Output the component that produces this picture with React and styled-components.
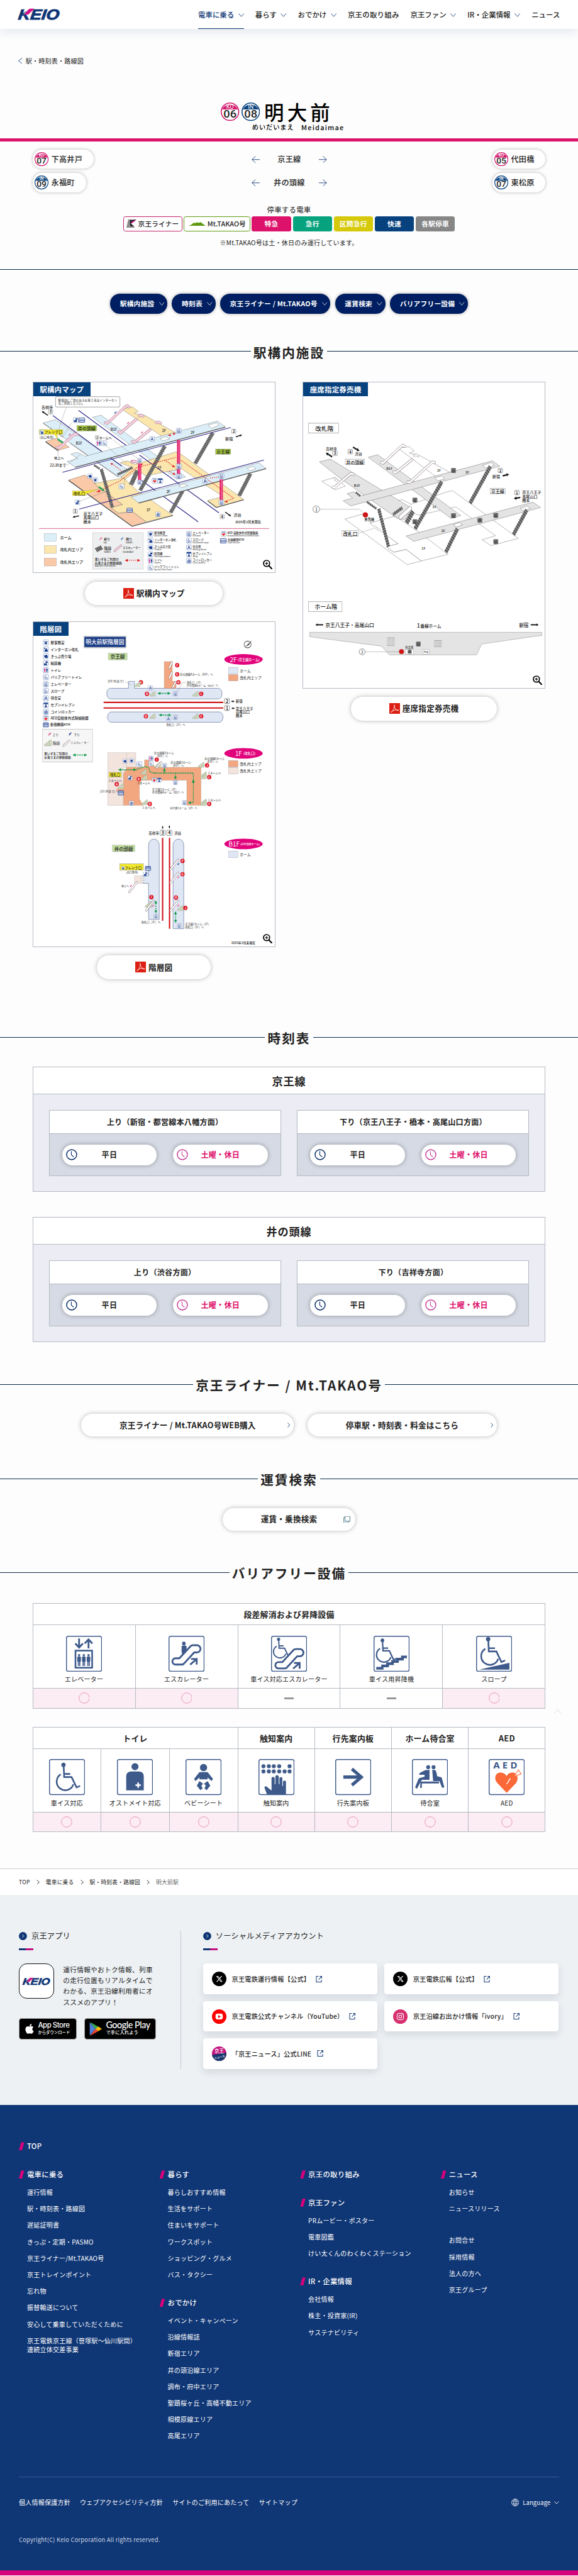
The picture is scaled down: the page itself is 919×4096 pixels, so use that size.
import React, { createContext, useContext } from "react";
import styled, { createGlobalStyle, css } from "styled-components";
import { FaApple, FaXTwitter, FaInstagram } from "react-icons/fa6";

const NAVY = "#0f3675";
const PINK = "#dd126b";
const LINE = "#b4bac2";

const GlobalStyle = createGlobalStyle`
  * { box-sizing: border-box; }
  body {
    margin: 0;
    background: #fdfdfd;
    overflow: hidden;
  }
`;

const Page = styled.div`
  width: 1284px;
  zoom: 0.71573;
  position: relative;
  color: #222;
  font-family: "Noto Sans CJK JP", "Noto Sans", sans-serif;
  font-size: 16px;
  letter-spacing: 0.02em;
  line-height: 1.5;
  white-space: nowrap;
`;

/* ---------- header ---------- */

const Header = styled.header`
  height: 64px;
  padding: 0 40px;
  display: flex;
  align-items: center;
  justify-content: space-between;
  background: #fff;
  box-shadow: 0 8px 20px rgba(15, 54, 117, 0.1);
`;

const LogoArt = styled.svg`
  display: block;
  overflow: visible;
`;

const Nav = styled.nav`
  display: flex;
  align-self: stretch;
  gap: 25px;
`;

const NavItem = styled.a`
  display: flex;
  align-items: center;
  gap: 9px;
  padding-top: 4px;
  font-size: 16px;
  font-weight: 500;
  letter-spacing: ${(p) => (p.$wide ? "0.02em" : "0")};
  color: ${(p) => (p.$active ? NAVY : "#222")};
  border-bottom: 2px solid ${(p) => (p.$active ? NAVY : "transparent")};
`;

const BackLink = styled.a`
  display: flex;
  align-items: center;
  gap: 8px;
  height: 22px;
  margin: 60px 0 0 40px;
  font-size: 14px;
`;

/* ---------- station sign ---------- */

const StationHead = styled.div`
  width: 302px;
  margin: 82px auto 14px;
`;

const NameRow = styled.div`
  display: flex;
  align-items: center;
  gap: 4px;
  height: 41px;
`;

const StationName = styled.h1`
  margin: 0 0 0 6px;
  font-size: 44px;
  font-weight: 500;
  letter-spacing: 0.16em;
  line-height: 41px;
  color: #000;
`;

const Ruby = styled.div`
  display: flex;
  gap: 16px;
  height: 20px;
  margin-top: 4px;
  padding-left: 69px;
  font-size: 14.3px;
  font-weight: 500;
  line-height: 20px;
  letter-spacing: 0.09em;
  color: #000;
  span + span {
    font-size: 15.3px;
    letter-spacing: 0.11em;
  }
`;

const PinkBar = styled.div`
  height: 7px;
  background: ${PINK};
`;

const Neighbours = styled.div`
  display: flex;
  flex-direction: column;
  gap: 10px;
  padding: 19px 72px 0 73px;
`;

const NeighbourRow = styled.div`
  display: grid;
  grid-template-columns: 1fr auto 1fr;
  align-items: center;
  height: 42px;
  > :last-child { justify-self: end; }
  > :first-child { justify-self: start; }
`;

const StationPill = styled.a`
  display: flex;
  align-items: center;
  gap: 6px;
  height: 42px;
  padding: 0 25px 0 4px;
  border-radius: 21px;
  background: #fff;
  font-size: 17px;
  font-weight: 500;
  box-shadow: 0 0 8px rgba(0, 0, 0, 0.3);
`;

const LineName = styled.div`
  display: flex;
  align-items: center;
  justify-content: space-between;
  width: 168px;
  font-size: 17px;
  font-weight: 500;
`;

const StopTitle = styled.div`
  margin-top: 28px;
  text-align: center;
  font-size: 16px;
  line-height: 20px;
`;

const Tags = styled.div`
  display: flex;
  justify-content: center;
  gap: 4px;
  margin-top: 6px;
`;

const Tag = styled.span`
  display: flex;
  align-items: center;
  justify-content: center;
  gap: 3px;
  width: ${(p) => p.$w || 87}px;
  height: 33px;
  border-radius: 5px;
  font-size: 15px;
  font-weight: 700;
  color: #fff;
  background: ${(p) => p.$bg};
  ${(p) => p.$border && css`
    background: #fff;
    color: #222;
    font-weight: 500;
    letter-spacing: 0.01em;
    border: 2px solid ${p.$border};
  `}
`;

const Note = styled.p`
  margin: 15px 0 49px;
  text-align: center;
  font-size: 14px;
  line-height: 20px;
`;

const Rule = styled.div`
  height: 1px;
  background: #0b2c49;
`;

const Anchors = styled.div`
  display: flex;
  justify-content: center;
  gap: 10px;
  margin: 54px 0 62px;
`;

const Anchor = styled.a`
  display: flex;
  align-items: center;
  gap: 10px;
  height: 44px;
  padding: 0 7px 0 22px;
  border-radius: 22px;
  background: #001f62;
  color: #fff;
  font-size: 15px;
  font-weight: 700;
  box-shadow: 0 0 8px rgba(0, 0, 0, 0.35);
`;

const HeadingRow = styled.h2`
  display: flex;
  align-items: center;
  gap: 6px;
  height: 44px;
  margin: ${(p) => p.$top || 0}px 0 0;
  font-size: 28.8px;
  font-weight: 700;
  letter-spacing: 0.1em;
  line-height: 44px;
  &::before, &::after {
    content: "";
    flex: 1;
    height: 1px;
    background: #0b2c49;
  }
  span { padding-top: 4px; }
`;

/* ---------- map cards ---------- */

const MapGrid = styled.div`
  display: grid;
  grid-template-columns: 540px 540px;
  column-gap: 60px;
  align-items: start;
  margin: 45px 72px 0;
`;

const MapColumn = styled.div`
  display: flex;
  flex-direction: column;
  align-items: center;
`;

const MapCard = styled.div`
  position: relative;
  display: flex;
  flex-direction: column;
  width: 540px;
  height: ${(p) => p.$h}px;
  margin-top: ${(p) => p.$mt || 0}px;
  border: 1px solid ${LINE};
  background: #fff;
`;

const MapLabel = styled.div`
  align-self: flex-start;
  height: 31px;
  padding: 0 15px;
  background: #07427f;
  color: #fff;
  font-size: 16px;
  font-weight: 700;
  line-height: 31px;
`;

const Diagram = styled.svg`
  display: block;
  width: 538px;
  height: ${(p) => p.$h}px;
`;

const Magnifier = styled.svg`
  position: absolute;
  right: 5px;
  bottom: 6px;
  width: 22px;
  height: 22px;
`;

const PillButton = styled.a`
  position: relative;
  display: inline-flex;
  align-items: center;
  gap: 5px;
  height: ${(p) => p.$h || 50}px;
  margin-top: ${(p) => p.$mt || 0}px;
  padding: 0 85px;
  border-radius: 27px;
  background: #fff;
  font-size: 17.6px;
  font-weight: 700;
  box-shadow: 0 0 11px rgba(0, 0, 0, 0.28);
`;

const EndIcon = styled.span`
  position: absolute;
  right: ${(p) => p.$right}px;
  top: 50%;
  display: flex;
  transform: translateY(-50%);
`;

const ButtonRow = styled.div`
  display: flex;
  justify-content: center;
  gap: 30px;
  margin-top: 43px;
`;

/* ---------- timetable ---------- */

const TimeBox = styled.section`
  height: 278px;
  margin: ${(p) => p.$mt}px 72px 0;
  border: 1px solid ${LINE};
  background: #ebecf4;
`;

const TimeTitle = styled.h3`
  margin: 0;
  height: 60px;
  border-bottom: 1px solid ${LINE};
  background: #fff;
  text-align: center;
  font-size: 24px;
  font-weight: 700;
  letter-spacing: 0.05em;
  line-height: 62px;
`;

const Directions = styled.div`
  display: grid;
  grid-template-columns: 1fr 1fr;
  gap: 36px;
  padding: 35px;
`;

const Direction = styled.div`
  height: 146px;
  border: 1px solid ${LINE};
  background: #d5dae4;
`;

const DirectionTitle = styled.h4`
  margin: 0;
  height: 51px;
  border-bottom: 1px solid ${LINE};
  background: #fff;
  text-align: center;
  font-size: 16.9px;
  font-weight: 700;
  line-height: 51px;
`;

const Days = styled.div`
  display: grid;
  grid-template-columns: 1fr 1fr;
  gap: 36px;
  padding: 23.5px 28px;
`;

const DayButton = styled.a`
  position: relative;
  display: flex;
  align-items: center;
  justify-content: center;
  height: 46px;
  border-radius: 23px;
  background: #fff;
  color: ${(p) => (p.$holiday ? PINK : "#222")};
  font-size: 16.9px;
  font-weight: 700;
  box-shadow: 0 0 11px rgba(0, 0, 0, 0.32);
  svg {
    position: absolute;
    left: 9px;
    top: 10px;
  }
`;

/* ---------- barrier-free tables ---------- */

const FacilityTable = styled.div`
  display: grid;
  grid-template-columns: ${(p) => p.$cols};
  grid-template-rows: 47.5px 141px 1fr;
  height: 234px;
  margin: ${(p) => p.$mt}px 72px 0;
  border-top: 1px solid ${LINE};
  border-left: 1px solid ${LINE};
`;

const Cell = styled.div`
  display: flex;
  flex-direction: column;
  align-items: center;
  justify-content: center;
  border-right: 1px solid ${LINE};
  border-bottom: 1px solid ${LINE};
  background: ${(p) => (p.$yes ? "#fcecf4" : "#fff")};
`;

const HeadCell = styled(Cell)`
  grid-column: span ${(p) => p.$span || 1};
  font-size: 18px;
  font-weight: 700;
`;

const FacilityCell = styled(Cell)`
  justify-content: flex-start;
  gap: 6px;
  padding-top: 23px;
  font-size: 14px;
`;

const Dash = styled.span`
  width: 22px;
  height: 4px;
  background: #979797;
`;

const PageTop = styled.div`
  position: absolute;
  left: 1231px;
  top: 3797px;
  display: flex;
`;

/* ---------- lower page ---------- */

const Breadcrumb = styled.div`
  display: flex;
  align-items: center;
  gap: 14px;
  height: 57.5px;
  margin-top: 81px;
  padding: 0 42px;
  border-top: 1px solid #cfcfcf;
  background: #fff;
  font-size: 12.2px;
  span:last-child { color: #666; }
`;

const Promo = styled.section`
  display: flex;
  height: 468px;
  padding: 80px 42px;
  background: #edf1f4;
`;

const AppColumn = styled.div`
  width: 361px;
  height: 308px;
  border-right: 1px solid #c3c9d0;
`;

const SocialColumn = styled.div`
  flex: 1;
  padding-left: 48px;
`;

const PromoTitle = styled.h3`
  display: flex;
  align-items: center;
  gap: 10px;
  height: 24px;
  margin: 0;
  font-size: 17px;
  font-weight: 400;
`;

const TwoTone = styled.div`
  width: 32px;
  height: 4px;
  margin: 15.5px 0 30px;
  background: linear-gradient(90deg, ${NAVY} 50%, #c20f80 50%);
`;

const AppInfo = styled.div`
  display: flex;
  gap: 20px;
  p {
    width: 206px;
    margin: 1px 0 0;
    font-size: 15px;
    line-height: 24px;
    letter-spacing: 0.025em;
    white-space: normal;
  }
`;

const AppIcon = styled.div`
  display: flex;
  align-items: center;
  justify-content: center;
  width: 78px;
  height: 78px;
  border: 1px solid #111;
  border-radius: 18px;
  background: #fff;
`;

const Stores = styled.div`
  display: flex;
  gap: 17px;
  margin-top: 24px;
`;

const StoreBadge = styled.a`
  display: flex;
  align-items: center;
  gap: ${(p) => p.$gap}px;
  width: ${(p) => p.$w}px;
  height: 47px;
  padding-left: 10px;
  border: 1px solid #a6a6a6;
  border-radius: 6px;
  background: #000;
  color: #fff;
`;

const StoreText = styled.span`
  display: flex;
  flex-direction: column;
  font-family: ${(p) => (p.$play ? '"Lato"' : '"Inter"')}, "Noto Sans CJK JP", sans-serif;
  font-size: ${(p) => (p.$play ? 20 : 16)}px;
  font-weight: 500;
  line-height: 18px;
  letter-spacing: ${(p) => (p.$play ? "-0.03em" : "-0.04em")};
  small {
    font-size: ${(p) => (p.$play ? 10.3 : 8.9)}px;
    line-height: 14px;
    letter-spacing: 0;
  }
`;

const Cards = styled.div`
  display: grid;
  grid-template-columns: 387.5px 387.5px;
  grid-auto-rows: 68px;
  gap: 15px;
`;

const SocialCard = styled.a`
  display: flex;
  align-items: center;
  gap: 12px;
  padding-left: 20px;
  border-radius: 6px;
  background: #fff;
  font-size: 14.2px;
  font-weight: 500;
  box-shadow: 0 6px 16px rgba(40, 50, 70, 0.13);
`;

const Round = styled.span`
  display: flex;
  align-items: center;
  justify-content: center;
  width: 32px;
  height: 32px;
  border-radius: 50%;
  overflow: hidden;
  background: ${(p) => p.$bg};
  color: #fff;
`;

/* ---------- footer ---------- */

const Footer = styled.footer`
  height: 1045px;
  padding: 79.5px 42px 0;
  border-bottom: 12px solid #d6017c;
  background: ${NAVY};
  color: #fff;
`;

const Sitemap = styled.div`
  display: grid;
  grid-template-columns: repeat(4, 312.4px);
  height: 683.4px;
  margin-top: 38.5px;
`;

const FooterTitle = styled.div`
  display: flex;
  align-items: center;
  gap: 6px;
  height: 24px;
  margin-top: ${(p) => p.$mt || 0}px;
  font-size: 16px;
  font-weight: 500;
`;

const Slash = styled.i`
  width: 12px;
  height: 18px;
  background: #d6017c;
  clip-path: polygon(42% 0, 100% 0, 58% 100%, 0 100%);
`;

const FooterList = styled.ul`
  display: flex;
  flex-direction: column;
  gap: 16.6px;
  margin: ${(p) => p.$mt}px 0 0;
  padding: 0 0 0 18px;
  list-style: none;
  font-size: 14px;
  line-height: 20px;
`;

const FooterBar = styled.div`
  display: flex;
  justify-content: space-between;
  align-items: center;
  height: 112px;
  border-top: 1px solid rgba(255, 255, 255, 0.18);
  font-size: 14px;
`;

const Links = styled.div`
  display: flex;
  gap: 21px;
`;

const Language = styled.div`
  display: flex;
  align-items: center;
  gap: 8px;
  padding-top: 2px;
  font-size: 13px;
`;

const Copyright = styled.div`
  margin-top: 17px;
  font-size: 13px;
  line-height: 20px;
  color: #cfd8e6;
`;

/* ---------- small icons ---------- */

const Chevron = ({ dir = "down", w = 12, h = 7, color = NAVY, sw = 1.2 }) => {
  const paths = {
    down: `M.6 .6 L${w / 2} ${h - 0.6} L${w - 0.6} .6`,
    up: `M.6 ${h - 0.6} L${w / 2} .6 L${w - 0.6} ${h - 0.6}`,
    left: `M${w - 0.6} .6 L.8 ${h / 2} L${w - 0.6} ${h - 0.6}`,
    right: `M.6 .6 L${w - 0.8} ${h / 2} L.6 ${h - 0.6}`,
  };
  return (
    <svg width={w} height={h} fill="none" stroke={color} strokeWidth={sw}>
      <path d={paths[dir]} />
    </svg>
  );
};

const LongArrow = ({ flip }) => (
  <svg width="18" height="16" fill="none" stroke={NAVY} strokeWidth="1.2">
    <path d={flip ? "M0 8 H17 M9 .5 L17 8 L9 15.5" : "M18 8 H1 M9 .5 L1 8 L9 15.5"} />
  </svg>
);

const Logo = ({ w = 93 }) => (
  <LogoArt width={w} height={(w * 24) / 93} viewBox="0 0 93 24">
    <text transform="translate(-1 23.2) skewX(-7)" fontFamily='"Liberation Sans", Arial, sans-serif' fontWeight="700" fontStyle="italic"
      fontSize="32" letterSpacing="0" textLength="91" lengthAdjust="spacingAndGlyphs" fill={NAVY} stroke={NAVY} strokeWidth="1.3">KEIO</text>
    <polygon points="12.5,13 25,-.5 36,-.5 22,13" fill="#d6128a" />
    <path d="M12 12.5 L24 -.5" stroke="#fff" strokeWidth="1.2" />
  </LogoArt>
);

const LINE_COLORS = { KO: "#d3186c", IN: "#0b4580" };

const StationNumber = ({ code, num, size = 41 }) => (
  <svg width={size} height={size} viewBox="0 0 41 41">
    <circle cx="20.5" cy="20.5" r="19.4" fill="#fff" stroke={LINE_COLORS[code]} strokeWidth="2.2" />
    <path d="M3 15.5 A19.4 19.4 0 0 1 38 15.5 Z" fill={LINE_COLORS[code]} />
    <text x="20.5" y="13.8" textAnchor="middle" fontFamily="Roboto, sans-serif" fontSize="12.5" letterSpacing="0" fill="#fff">{code}</text>
    <text x="20.5" y="33" textAnchor="middle" fontFamily="Roboto, sans-serif" fontWeight="500" fontSize="22"
      textLength="29" lengthAdjust="spacingAndGlyphs" letterSpacing="0" fill="#222">{num}</text>
  </svg>
);

const PdfIcon = () => (
  <svg width="24" height="24" viewBox="0 0 24 24">
    <rect width="24" height="24" fill="#dc1f12" />
    <path d="M3.5 20.5 C7 18.5 12 12 11.5 4.5 C11 3 10.3 4.5 11 7 C12 12 16 16.5 20.8 16.8 C22 16.5 20 14.8 16 15 C11 15.2 5 17.5 3.5 20.5 Z"
      fill="none" stroke="#fff" strokeWidth="1.1" />
  </svg>
);

const Clock = ({ color }) => (
  <svg width="25" height="25" fill="none" stroke={color} strokeWidth="2">
    <circle cx="12.5" cy="12.5" r="11.2" />
    <path d="M11.8 5 V13 L17 17.5" strokeWidth="1.5" />
  </svg>
);

const External = () => (
  <svg width="14" height="14" fill="none" stroke={NAVY} strokeWidth="1.4">
    <path d="M6 .8 H1.4 V13.2 H12.6 V8.5 M8.5 .8 H13.2 V5.5 M13 1 L6.5 8" />
  </svg>
);

const NewWindow = () => (
  <svg width="15" height="15" fill="none" stroke="#0b4560" strokeWidth="1">
    <path d="M3.5 .5 H14.5 V11.5 H3.5 Z M3.5 3.5 H.5 V14.5 H11.5 V11.5" />
  </svg>
);

const ZoomIn = () => (
  <Magnifier viewBox="0 0 22 22" fill="none" stroke="#000">
    <circle cx="8.2" cy="8.2" r="6.8" strokeWidth="2.4" />
    <path d="M13.2 13.2 L20.5 20.8" strokeWidth="3" />
    <path d="M5 8.2 H11.4 M8.2 5 V11.4" strokeWidth="1.6" />
  </Magnifier>
);

const LinerMark = () => (
  <svg width="23" height="19" viewBox="0 0 23 19">
    <polygon points="4,0 11,0 6,18 0,18" fill="#8a8a8a" />
    <polygon points="8,1 22,0 10,9 17,15 8,16" fill="#222" />
    <polygon points="11,5 22,1 11,9" fill="#d6128a" />
    <polygon points="5,16 17,14.5 18,18 4,18" fill="#8a8a8a" />
  </svg>
);

const MountMark = () => (
  <svg width="40" height="9" viewBox="0 0 40 9">
    <polygon points="0,9 8,5.5 13,1.5 16,2.5 20,.8 24,1.8 28,.5 34,5 40,9" fill="#5d9a10" />
  </svg>
);

/* ---------- diagram parts ---------- */

// The diagrams are drawn on a stretched grid; k is the vertical factor
// that keeps letters and symbols in proportion.
const Grid = createContext(1);

const T = ({ x, y, s = 20, a = "start", c = "#222", w = 500, children }) => {
  const k = useContext(Grid);
  return (
    <text transform={`translate(${x} ${y}) scale(1 ${k})`} fontSize={s} fontWeight={w} fill={c}
      textAnchor={a} dominantBaseline="central" letterSpacing="0">{children}</text>
  );
};

const SYMBOLS = {
  office: <path d="M6 9 H24 V13 H6 Z M8 14 H22 V19 A7 6 0 0 1 8 19 Z" fill="#1c3f8f" />,
  intercom: <path d="M5 5 H11 V11 H5 Z M13 12 A4 4 0 1 1 21 12 V16 H25 V26 H8 V16 H13 Z" fill="#1c3f8f" />,
  ticket: <path d="M5 11 L22 6 L25 17 L25 24 H12 L7 18 Z" fill="#1c3f8f" />,
  fare: <path d="M13 5 H25 V13 H13 Z M5 15 H21 V26 H5 Z" fill="#1c3f8f" />,
  toilet: <><path d="M7 4 h4 v4 h-4z M5 9 H13 L11 19 V26 H7 V19 Z" fill="#d6128a" /><path d="M19 4 h4 v4 h-4z M17 9 H25 V18 H23 V26 H19 V18 H17Z" fill="#1c3f8f" /><path d="M15 4 V26" stroke="#444" /></>,
  wheel: <path d="M12 5 V15 H19 L22 24 H25 M9 12 A6.5 6.5 0 1 0 20 21" fill="none" stroke="#1c3f8f" strokeWidth="2.2" />,
  slope: <path d="M12 4 V13 H18 L21 20 M9 10 A5.5 5.5 0 1 0 18 19 M5 26 L26 21" fill="none" stroke="#1c3f8f" strokeWidth="2.2" />,
  elev: <path d="M10 4 V10 M7 8 L10 11 L13 8 M20 11 V5 M17 7 L20 4 L23 7 M8 14 H22 V26 H8 Z M12 17 V24 M15 17 V24 M18 17 V24" fill="none" stroke="#1c3f8f" strokeWidth="2" />,
  wait: <path d="M12 6 V15 L6 24 M18 6 V15 L24 24 M9 19 H21" fill="none" stroke="#1c3f8f" strokeWidth="3.4" />,
  shop: <path d="M3 3 H27 V11 H3 Z M12 13 h6 v5 h-6z M8 27 L11 19 H19 L22 27 Z" fill="#1c3f8f" />,
  locker: <path d="M8 12 H23 V25 H8 Z M11 8 H20 V12 M12 16 H19 V20 H12 Z" fill="none" stroke="#1c3f8f" strokeWidth="2.6" />,
  aed: <><path d="M7 4 H24 V8 H7 Z" fill="#1c3f8f" opacity=".7" /><path d="M15 27 L6 17 C4 11 12 9 15 14 C18 9 26 11 24 17 Z" fill="#e0262c" /></>,
};

const Sym = ({ n, x, y, s = 30 }) => {
  const k = useContext(Grid);
  return (
    <g transform={`translate(${x} ${y}) scale(${s / 30} ${(s / 30) * k})`}>
      <rect x="1" y="1" width="28" height="28" rx="3" fill="#fff" stroke="#4a6aa8" strokeWidth="1.6" />
      {SYMBOLS[n]}
    </g>
  );
};

const Atm = ({ x, y, w = 33 }) => {
  const k = useContext(Grid);
  return (
    <g>
      <rect x={x} y={y} width={w} height={w * 0.75 * k} rx="2" fill="#dfe6f4" stroke="#1c3f8f" strokeWidth="3" />
      <T x={x + w / 2} y={y + w * 0.38 * k} s={w * 0.42} a="middle" c="#1c3f8f" w={700}>ATM</T>
    </g>
  );
};

const Num = ({ x, y, s = 24, children }) => {
  const k = useContext(Grid);
  return (
    <g>
      <rect x={x - s / 2} y={y - (s / 2) * k} width={s} height={s * k} rx="3" fill="#fff" stroke="#333" strokeWidth="1.5" />
      <T x={Number(x)} y={Number(y)} s={s * 0.86} a="middle" w={700}>{children}</T>
    </g>
  );
};

const Stairs = ({ d, w = 20 }) => (
  <g fill="none">
    <path d={d} stroke="#808080" strokeWidth={w} />
    <path d={d} stroke="#3a3a3a" strokeWidth={w + 3} strokeDasharray="3 8" />
  </g>
);

const Rail = ({ d, fill = "#f7ccdc", w = 13 }) => (
  <g fill="none" strokeLinecap="round" strokeLinejoin="round">
    <path d={d} stroke="#6b5560" strokeWidth={w + 2.5} />
    <path d={d} stroke={fill} strokeWidth={w} />
  </g>
);

const Arrow = ({ x1, y1, x2, y2, c = "#111", w = 6 }) => {
  const ang = Math.atan2(y2 - y1, x2 - x1);
  const l = w * 2.4;
  const bx = x2 - Math.cos(ang) * l;
  const by = y2 - Math.sin(ang) * l;
  const nx = -Math.sin(ang) * w * 1.15;
  const ny = Math.cos(ang) * w * 1.15;
  return (
    <g>
      <path d={`M${x1} ${y1} L${bx} ${by}`} stroke={c} strokeWidth={w} />
      <polygon points={`${x2},${y2} ${bx + nx},${by + ny} ${bx - nx},${by - ny}`} fill={c} />
    </g>
  );
};

const StationMap = () => {
  const legend = [
    ["office", 727, 1030, "駅事務室", "Station Office"], ["intercom", 727, 1073, "インターホン改札", "Intercom"],
    ["ticket", 727, 1116, "きっぷ売り場", "Tickets"], ["fare", 727, 1160, "精算機", "Fare Adjustment"],
    ["toilet", 727, 1202, "トイレ", "Toilets"], ["wheel", 727, 1246, "バリアフリートイレ", "Barrier-Free Toilet"],
    ["elev", 943, 1030, "エレベーター", "Elevator"], ["slope", 943, 1073, "スロープ", "Accessible slope"],
    ["wait", 943, 1116, "待合室", "Waiting Room"], ["shop", 943, 1160, "セブンイレブン", "Shop"],
    ["locker", 943, 1202, "コインロッカー", "Coin Lockers"], ["aed", 1138, 1030, "AED 自動体外式除細動器", "Automated External Defibrillator"],
  ];
  return (
    <Grid.Provider value={1.127}>
      <Diagram $h={392} viewBox="83 171 1362 1120" preserveAspectRatio="none">
        <g stroke="#555" strokeWidth="1.5">
          <polygon points="152,459 215,437 285,495 222,516" fill="#f9c9a8" />
          <polygon points="138,341 207,320 640,659 615,672 560,683 290,468 250,430" fill="#dceff9" />
          <polygon points="416,305 465,292 940,685 890,697" fill="#dceff9" />
          <polygon points="583,255 640,238 674,268 650,280 668,285 705,290 885,405 855,440 825,440" fill="#fbe6ae" />
          <polygon points="281,704 372,672 425,710 440,740 585,860 520,880 562,915 642,905 718,970 638,997" fill="#f9c9a8" />
          <polygon points="425,727 592,690 665,770 868,928 718,970 642,905 562,915 520,880 585,860" fill="#fbe6ae" />
          <polygon points="570,594 612,582 655,605 885,525 920,545 1266,828 1112,877 1063,835 1150,810 915,632 715,678 668,638 600,700 575,688 640,625" fill="#fbe6ae" />
        </g>
        <g stroke="#444" strokeWidth="4" fill="none">
          <path d="M281 706 L638 999 L868 930 M1063 837 L1112 879 L1266 830 M222 518 L152 461" />
          <path d="M138 343 L250 432 M290 470 L560 685" strokeWidth="2.5" />
        </g>
        <g stroke="#352f8c" strokeWidth="4.5">
          <path d="M193 294 L470 524 M515 562 L580 615 M690 705 L1010 970" />
          <path d="M337 261 L610 488 M680 545 L1127 913" />
        </g>
        <Stairs d="M465 635 L528 880" w={17} />
        <Stairs d="M1092 405 L993 600" /><Stairs d="M822 490 L684 770" />
        <Stairs d="M1304 665 L1240 805" /><Stairs d="M922 775 L855 912" />
        <Stairs d="M668 645 L632 735" w={24} /><Stairs d="M640 625 L556 670" w={14} />
        <Stairs d="M425 610 L455 632" w={10} />
        <g stroke="#555" strokeWidth="1.5" fill="#dceff9">
          <polygon points="273,586 333,567 294,540 330,528 375,553 1118,329 1163,366 318,622" />
          <polygon points="632,812 1350,594 1392,630 675,849" />
          <polygon points="1065,355 1115,340 1128,355 1085,375" fill="#fff" />
          <polygon points="1285,628 1320,618 1335,632 1300,645" fill="#fff" />
          <polygon points="795,440 830,428 850,442 812,455" fill="#fff" />
          <polygon points="900,740 930,728 952,740 918,752" fill="#fff" />
        </g>
        <path d="M318 624 L1163 368 M675 851 L1392 632" stroke="#444" strokeWidth="4" />
        <path d="M247 655 L1193 370 M341 889 L1380 577" stroke="#352f8c" strokeWidth="4.5" />
        <g stroke="#e2236d" strokeWidth="18">
          <path d="M900 450 V668 M1140 700 V832 M681 600 V708" />
        </g>
        <path d="M902 450 V668 M1142 700 V832 M683 600 V708" stroke="#f6a4c4" strokeWidth="3" />
        <Rail d="M488 338 L497 345 L598 240 L610 230 L622 240" />
        <Rail d="M563 396 L573 405 L662 318" /><Rail d="M640 458 L650 466 L738 385" />
        <Rail d="M680 297 L688 290 L700 298" /><Rail d="M775 340 L784 334 L798 342" />
        <Rail d="M215 495 L225 502 L318 410 L330 416" /><Rail d="M640 592 L652 583 L668 592" />
        <g stroke="#dd1f1f" strokeWidth="5" strokeDasharray="5 6" fill="none">
          <path d="M455 772 L570 710 L665 625 L885 560 M822 578 L880 622 M915 580 L1210 820 L1165 840 M848 648 L876 668 M528 602 L580 648 M1078 692 L1125 685" />
        </g>
        <g fill="#dd1f1f">
          <polygon points="438,780 455,766 458,782" /><polygon points="838,420 856,412 856,426" /><polygon points="886,408 868,404 870,418" />
          <polygon points="516,596 530,598 524,610" /><polygon points="880,624 862,620 870,608" /><polygon points="884,672 866,668 874,656" />
          <polygon points="1156,842 1174,834 1174,848" /><polygon points="684,600 700,600 692,612" />
        </g>
        <g fill="#2fa560">
          <circle cx="225" cy="448" r="7" /><circle cx="235" cy="456" r="7" /><circle cx="245" cy="463" r="7" />
          <circle cx="456" cy="752" r="7" /><circle cx="466" cy="760" r="7" /><circle cx="475" cy="768" r="7" />
        </g>
        <g stroke="#555" strokeWidth="1.2" fill="none">
          <path d="M268 241 L225 385 M222 500 V550 M298 340 L245 435 M530 448 L672 570 M495 488 L608 600 M268 612 L350 540 M345 838 L495 775 M596 685 V735 M640 905 L605 905" />
        </g>
        <rect x="208" y="174" width="362" height="66" rx="6" fill="#fff" stroke="#555" strokeWidth="2" />
        <T x="223" y="196" s="16.6" w={400}>駅係員にご用のあるお客さまはインターホン</T>
        <T x="223" y="216" s="16.6" w={400}>をご利用ください。</T>
        <T x="128" y="240" s="22">吉祥寺</T><Num x="180" y="271">3</Num>
        <Arrow x1={165} y1={293} x2={130} y2={266} /><Arrow x1={1222} y1={429} x2={1258} y2={417} />
        <Arrow x1={340} y1={932} x2={303} y2={941} /><Arrow x1={1162} y1={908} x2={1196} y2={935} />
        <Arrow x1={550} y1={268} x2={538} y2={282} c="#1c57a8" w={4} />
        {[[610, 347], [688, 408], [282, 422], [630, 588]].map(([x, y]) => <Arrow key={x} x1={x} y1={y} x2={x + 12} y2={y - 13} c="#e2437d" w={4} />)}
        <Sym n="fare" x={307} y={306} /><Atm x={339} y={309} />
        <rect x="328" y="358" width="110" height="34" fill="#a5cb3a" stroke="#555" /><T x="383" y="376" s="25" a="middle">井の頭線</T>
        <polygon points="116,383 249,383 249,414 215,414 222,440 200,414 116,414" fill="#f4e92a" stroke="#777" />
        <Sym n="intercom" x={118} y={386} s={25} /><T x="146" y="399" s="20">フレンテ口</T>
        <T x="118" y="428" s="17" w={400}>(出口専用)</T><T x="200" y="562" s="18">地上へ</T>
        <T x="176" y="610" s="20">22:30まで</T><T x="340" y="470" s="20" a="middle">B1F</T><T x="535" y="381" s="20" a="middle">B1F</T>
        <Num x="441" y="433" s={20}>3</Num><T x="454" y="434" s="17.5">ホームへ</T>
        <Sym n="toilet" x={436} y={453} /><Sym n="wheel" x={467} y={453} />
        <T x="818" y="391" s="20" a="middle">2F</T><T x="979" y="401" s="20" a="middle">2F</T>
        <T x="842" y="776" s="20" a="middle">2F</T><T x="792" y="626" s="20" a="middle">1F</T><T x="730" y="892" s="20" a="middle">1F</T>
        <Num x="1210" y="394">2</Num><T x="1162" y="441" s="22">新宿</T>
        <rect x="1108" y="507" width="85" height="33" fill="#a5cb3a" stroke="#555" /><T x="1150" y="524" s="25" a="middle">京王線</T>
        <Sym n="wait" x={737} y={427} s={28} /><Sym n="elev" x={886} y={374} /><Sym n="elev" x={886} y={600} /><Sym n="elev" x={886} y={664} />
        <Sym n="elev" x={668} y={565} s={26} /><Sym n="elev" x={667} y={703} s={26} /><Sym n="elev" x={1126} y={662} /><Sym n="elev" x={1126} y={830} />
        <Sym n="wait" x={1035} y={694} /><Sym n="aed" x={750} y={692} /><Sym n="shop" x={782} y={692} />
        <Sym n="wheel" x={564} y={728} /><Sym n="ticket" x={388} y={665} s={27} /><Sym n="office" x={418} y={687} s={27} />
        <Sym n="fare" x={318} y={831} s={27} /><Atm x={609} y={883} w={31} /><Sym n="locker" x={770} y={907} s={28} />
        <polygon points="303,773 378,773 450,764 378,792 378,803 303,803" fill="#f4e92a" stroke="#777" /><T x="308" y="789" s="22">改札口</T>
        <Num x="319" y="903">1</Num><T x="364" y="917" s="22">京王八王子</T><T x="364" y="943" s="22">高尾山口</T><T x="364" y="969" s="22">橋本</T>
        <Num x="1145" y="937">4</Num><T x="1209" y="926" s="22">渋谷</T><T x="1218" y="972" s="18.5">2025年3月末現在</T>
        <path d="M115 1012.5 H1409" stroke="#d0406f" strokeWidth="3" />
        {[["#dceff9", 1044, "ホーム"], ["#fbe6ae", 1121, "改札内エリア"], ["#f9c9a8", 1201, "改札外エリア"]].map(([c, y, t]) => (
          <g key={t}><rect x="145" y={y} width="67" height="50" fill={c} stroke="#667" /><T x="233" y={y + 25} s="21.8">{t}</T></g>
        ))}
        <rect x="418" y="1039" width="282" height="232" fill="#eeeff0" stroke="#bbb" strokeWidth="2" />
        <Arrow x1={456} y1={1085} x2={469} y2={1069} c="#e2437d" w={4} /><T x="479" y="1077" s="18">昇り</T><T x="477" y="1098" s="14" w={400}>Up</T>
        <Arrow x1={588} y1={1069} x2={575} y2={1085} c="#1c57a8" w={4} /><T x="603" y="1077" s="18">降り</T><T x="603" y="1098" s="14" w={400}>Down</T>
        <Stairs d="M436 1150 L468 1132" w={26} /><T x="481" y="1137" s="20.5">階段</T><T x="480" y="1158" s="14" w={400}>Stairs</T>
        <Rail d="M542 1155 L576 1122" w={10} /><T x="586" y="1137" s="14.3">エスカレーター</T><T x="586" y="1158" s="14" w={400}>Escalator</T>
        <T x="429" y="1206" s="16.8">車いすをご利用の</T><T x="429" y="1228" s="16.9">お客さまの移動経路</T><T x="429" y="1249" s="13.8" w={400}>Barrier-Free Route</T>
        <path d="M612 1215 H670" stroke="#dd1f1f" strokeWidth="5" strokeDasharray="5 6" />
        <polygon points="597,1215 614,1206 614,1224" fill="#dd1f1f" /><polygon points="685,1215 668,1206 668,1224" fill="#dd1f1f" />
        {legend.map(([n, x, y, ja, en]) => (
          <g key={n}><Sym n={n} x={x} y={y} /><T x={x + 36} y={y + 10} s="15.6">{ja}</T><T x={x + 36} y={y + 28} s="12" w={400}>{en}</T></g>
        ))}
        <Atm x={1135} y={1077} /><T x="1175" y="1083" s="15.6">金融機関ATM</T><T x="1175" y="1101" s="12" w={400}>Cash service</T>
      </Diagram>
    </Grid.Provider>
  );
};

const SeatMap = () => (
  <Grid.Provider value={0.756}>
    <Diagram $h={648.5} viewBox="83 115 1362 1241" preserveAspectRatio="none">
      <g stroke="#555" strokeWidth="1.3" fill="#fff">
        <rect x="114" y="230" width="168" height="41" /><rect x="320" y="383" width="109" height="22" />
        <rect x="1134" y="508" width="86" height="22" /><rect x="114" y="990" width="188" height="41" />
        <polygon points="188,477 262,460 320,498 262,513" />
        <polygon points="318,638 425,615 465,640 460,650 617,743 552,756 592,779 662,767 748,816 668,832" />
        <polygon points="458,655 600,625 735,694 898,788 748,816 662,767 592,779 552,756 617,743" />
        <polygon points="599,563 640,555 690,575 900,520 925,518 1293,720 1140,751 1089,726 1165,709 942,586 735,621 690,610 625,640 585,622 650,585" />
        <polygon points="615,335 680,330 708,348 680,357 740,368 910,440 830,458" />
      </g>
      <g stroke="#555" strokeWidth="1.3" fill="#e4e4e4">
        <polygon points="174,394 236,383 690,590 655,640 630,638 585,620 330,485 283,460" />
        <polygon points="449,375 502,364 970,623 915,635" />
        <polygon points="308,560 362,549 330,530 368,522 410,539 1148,390 1189,413 350,582" />
        <polygon points="661,710 1376,566 1418,589 705,733" />
        <polygon points="1092,409 1140,397 1158,410 1110,421" fill="#fff" /><polygon points="823,463 862,454 880,467 840,475" fill="#fff" />
        <polygon points="1303,592 1345,582 1362,592 1320,602" fill="#fff" /><polygon points="927,662 962,653 980,662 945,672" fill="#fff" />
      </g>
      <Stairs d="M1135 415 L1022 570" w={18} /><Stairs d="M862 480 L712 680" w={18} /><Stairs d="M1340 600 L1265 705" w={18} />
      <Stairs d="M950 680 L885 780" w={18} /><Stairs d="M508 595 L563 755" w={16} /><Stairs d="M700 605 L664 655" w={22} /><Stairs d="M640 590 L590 618" w={12} />
      <Stairs d="M380 525 L405 540 M442 565 L495 594" w={8} />
      <Rail d="M520 397 L532 400 L640 325 L655 328" fill="#fff" w={9} /><Rail d="M592 437 L604 440 L695 385" fill="#fff" w={9} />
      <Rail d="M670 480 L682 482 L810 395 L824 398" fill="#fff" w={9} /><Rail d="M250 502 L258 504 L350 444 L366 448" fill="#fff" w={9} />
      <Rail d="M708 367 L718 364 L730 370" fill="#fff" w={7} /><Rail d="M630 630 L685 592" fill="#fff" w={16} />
      <T x="202" y="251" s="34" a="middle">改札階</T><T x="210" y="338" s="21">吉祥寺</T><Num x="262" y="358" s={25}>3</Num><Num x="348" y="351" s={25}>4</Num>
      <T x="373" y="360" s="21">渋谷</T><T x="374" y="395" s="25" a="middle">井の頭線</T><Arrow x1={246} y1={373} x2={210} y2={356} /><Arrow x1={363} y1={332} x2={400} y2={348} />
      <T x="568" y="424" s="19" a="middle">B1F</T><T x="386" y="495" s="19" a="middle">B1F</T><T x="847" y="430" s="19" a="middle">2F</T><T x="1006" y="438" s="19" a="middle">2F</T>
      <T x="821" y="587" s="19" a="middle">1F</T><T x="871" y="687" s="19" a="middle">2F</T><T x="760" y="764" s="19" a="middle">1F</T>
      <Num x="1192" y="431" s={25}>2</Num><T x="1147" y="456" s="21.5">新宿</T><Arrow x1={1205} y1={454} x2={1241} y2={447} />
      <T x="1177" y="519" s="25" a="middle">京王線</T><Num x="1285" y="525" s={25}>1</Num><Arrow x1={1304} y1={546} x2={1268} y2={551} />
      <T x="1315" y="524" s="21.5">京王八王子</T><T x="1315" y="541" s="21.5">高尾山口</T><T x="1315" y="558" s="21.5">橋本</T>
      {[[915, 421], [698, 547], [915, 613], [1153, 612], [698, 639], [1153, 724]].map(([x, y]) => <g key={`${x}${y}`} filter="grayscale(1) brightness(.5)"><Sym n="elev" x={x} y={y} s={27} /></g>)}
      <g filter="grayscale(1) brightness(.5)"><Sym n="wait" x={1063} y={633} s={27} /></g>
      <path d="M176 596 H400 L430 618 M395 698 L478 678" stroke="#777" strokeWidth="1.3" fill="none" />
      <ellipse cx="157" cy="596" rx="19" ry="14" fill="#fff" stroke="#222" strokeWidth="1.6" /><T x="157" y="596" s="25" a="middle" w={400}>1</T>
      <ellipse cx="433" cy="620" rx="15" ry="11" fill="#cf1417" /><T x="427" y="641" s="18.5">券売機</T>
      <g fill="#fff" stroke="#777"><circle cx="260" cy="468" r="6" /><circle cx="271" cy="474" r="6" /><circle cx="281" cy="479" r="6" /><circle cx="488" cy="673" r="6" /><circle cx="499" cy="678" r="6" /><circle cx="509" cy="683" r="6" /></g>
      <rect x="302" y="687" width="92" height="24" fill="#fff" stroke="#555" /><T x="348" y="699" s="27" a="middle">改札口</T>
      <T x="211" y="1011" s="32" a="middle">ホーム階</T><Arrow x1={196} y1={1088} x2={152} y2={1088} w={5} /><T x="208" y="1087" s="27.4">京王八王子・高尾山口</T>
      <T x="722" y="1090" s="32">1</T><T x="742" y="1092" s="23.5">番線ホーム</T><T x="1297" y="1087" s="27">新宿</T><Arrow x1={1363} y1={1088} x2={1407} y2={1088} w={5} />
      <polygon points="120,1120 1425,1120 1425,1134 1395,1136 1087,1170 1058,1216 568,1216 524,1179 120,1139" fill="#e4e4e4" stroke="#777" strokeWidth="1.3" />
      {[555, 820].map((x) => <g key={x} stroke="#666" fill="#eee">{[0, 1, 2, 3, 4, 5].map((i) => <rect key={i} x={x + i * 7} y={x === 555 ? 1143 : 1154} width="6" height={x === 555 ? 33 : 28} />)}</g>)}
      <T x="657" y="1182" s="15.5">待合室</T><rect x="658" y="1192" width="46" height="21" fill="#fff" stroke="#777" /><rect x="757" y="1192" width="34" height="21" fill="#fff" stroke="#777" />
      <T x="774" y="1203" s="14" a="middle">売店</T>
      <g filter="grayscale(1) brightness(.5)"><Sym n="wait" x={671} y={1194} s={22} /><Sym n="elev" x={718} y={1160} s={26} /></g>
      <path d="M433 1203 H625" stroke="#777" strokeWidth="1.3" />
      <ellipse cx="415" cy="1203" rx="17" ry="13" fill="#fff" stroke="#222" strokeWidth="1.6" /><T x="415" y="1203" s="23" a="middle" w={400}>2</T>
      <ellipse cx="636" cy="1202" rx="14" ry="10.5" fill="#cf1417" />
    </Diagram>
  </Grid.Provider>
);

const Dot = ({ x, y, children }) => (
  <g><ellipse cx={x} cy={y} rx="12" ry="9" fill="#dd1324" /><T x={x} y={y} s="16" a="middle" c="#fff" w={700}>{children}</T></g>
);

const Steps = ({ x, y, s = 1 }) => (
  <g transform={`translate(${x} ${y}) scale(${s})`} stroke="#8a9a7a" strokeWidth="1">
    <polygon points="0,20 0,14 8,14 8,9 16,9 16,4 24,4 24,0 32,0 32,20" fill="#d3dcc4" />
    <path d="M8 14 V20 M16 9 V20 M24 4 V20" />
  </g>
);

const FloorMap = () => {
  const symbols = [
    ["office", 125, "駅事務室"], ["intercom", 154, "インターホン改札"], ["ticket", 182, "きっぷ売り場"], ["fare", 211, "精算機"],
    ["toilet", 240, "トイレ"], ["wheel", 269, "バリアフリートイレ"], ["elev", 298, "エレベーター"], ["slope", 326, "スロープ"],
    ["wait", 356, "待合室"], ["shop", 384, "セブンイレブン"], ["locker", 413, "コインロッカー"], ["aed", 440, "AED自動体外式除細動器"],
  ];
  const home = "#dfe6f4";
  const paid = "#f2a780";
  const floors = [
    [195, "2F", "(京王線ホーム)", [[241, home, "ホーム"], [271, paid, "改札内エリア"]]],
    [585, "1F", "(改札口)", [[628, paid, "改札内エリア"], [657, "#f3e4de", "改札外エリア"]]],
    [961, "B1F", "(井の頭線ホーム)", [[1004, home, "ホーム"]]],
  ];
  return (
    <Grid.Provider value={0.738}>
      <Diagram $h={691} viewBox="83 97 1362 1290" preserveAspectRatio="none">
        {symbols.map(([n, y, t]) => <g key={n}><Sym n={n} x={138} y={y - 11.5} s={31} /><T x="180" y={y} s="19.6">{t}</T></g>)}
        <Atm x={139} y={459} w={29} /><T x="177" y="466" s="19">金融機関ATM</T>
        <rect x="135" y="485" width="281" height="136" fill="#f6f6f7" stroke="#bbb" strokeWidth="2" />
        <Arrow x1={168} y1={510} x2={183} y2={499} c="#e2437d" w={4} /><T x="191" y="505" s="17" w={400}>上り</T>
        <Arrow x1={297} y1={499} x2={282} y2={510} c="#1c3f8f" w={4} /><T x="310" y="505" s="17" w={400}>下り</T>
        <Steps x={146} y={530} s={1.2} /><T x="191" y="542" s="21" w={400}>階段</T>
        <Rail d="M252 553 L285 533" fill="#fff" w={6} /><T x="293" y="542" s="14.8" w={400}>エスカレーター</T>
        <T x="144" y="585" s="16.7">車いすをご利用の</T><T x="144" y="600" s="16.7">お客さまの移動経路</T>
        <path d="M318 592 H372" stroke="#0d9a48" strokeWidth="5" strokeDasharray="5 5" /><polygon points="303,592 320,586 320,598" fill="#0d9a48" /><polygon points="386,592 370,586 370,598" fill="#0d9a48" />
        <rect x="368" y="99" width="236" height="47" fill="#1b3d86" stroke="#c3c6cc" strokeWidth="5" /><T x="486" y="123" s="31" a="middle" c="#fff">明大前駅階層図</T>
        <ellipse cx="1288" cy="133" rx="20" ry="14" fill="none" stroke="#555" strokeWidth="3" /><polygon points="1274,142 1312,116 1295,136" fill="#555" />
        {floors.map(([y, f, t, rows]) => (
          <g key={f}>
            <ellipse cx="1265" cy={y} rx="108" ry="22" fill="#e2027c" />
            <T x={f === "B1F" ? 1181 : f === "2F" ? 1188 : 1218} y={y} s="35" c="#fff" w={400}>{f}</T>
            <T x={f === "B1F" ? 1247 : f === "2F" ? 1232 : 1264} y={y} s={f === "B1F" ? 14.2 : 18.5} c="#fff">{t}</T>
            {rows.map(([ry, c, label]) => <g key={label}><rect x="1180" y={ry - 13} width="54" height="26" fill={c} stroke="#889" /><T x="1244" y={ry} s="20.5" w={400}>{label}</T></g>)}
          </g>
        ))}
        <rect x="504" y="169" width="107" height="28" fill="#bfdc9b" stroke="#aac" /><T x="557" y="183" s="27" a="middle">京王線</T>
        <g fill={home} stroke="#5d6f95" strokeWidth="2">
          <path d="M516 315 H618 V286 H652 V315 H1124 A20 22 0 0 1 1124 359 H516 A20 22 0 0 1 516 315 Z" />
          <rect x="500" y="413" width="650" height="43" rx="22" />
        </g>
        <path d="M478 373.5 H1151 M478 396.5 H1151" stroke="#d4141c" strokeWidth="5.5" />
        <polygon points="819,204 865,204 865,286 886,286 886,315 819,315" fill={paid} stroke="#888" />
        <Rail d="M848 230 L862 208" fill="#fff" w={7} /><Rail d="M848 272 L862 250" fill="#fff" w={7} /><Rail d="M868 310 L882 290" fill="#fff" w={7} />
        <Dot x={892} y={219}>F</Dot><Dot x={892} y={257}>G</Dot><Dot x={899} y={290}>H</Dot><Dot x={688} y={290}>A</Dot><Steps x={652} y={288} s={1} />
        <T x="501" y="285" s="17.5" w={400}>(22:30まで)</T><path d="M600 286 L632 301 M940 291 H920 L895 328" stroke="#555" fill="none" />
        <T x="907" y="257" s="15.2" w={400}>井の頭線4ホーム（B1F）へ</T><T x="945" y="291" s="15.2" w={400}>改札口（1F）</T><T x="945" y="304" s="14.5" w={400}>井の頭線4ホーム（B1F）へ</T>
        <Sym n="wait" x={729} y={304} s={26} /><Dot x={722} y={338}>B</Dot><Steps x={737} y={328} /><Sym n="elev" x={868} y={327} s={27} /><Steps x={979} y={328} /><Dot x={1027} y={338}>C</Dot>
        <Dot x={716} y={431}>D</Dot><Steps x={737} y={421} /><Sym n="elev" x={868} y={425} s={27} /><Steps x={979} y={421} /><Dot x={1027} y={431}>E</Dot><Sym n="wait" x={830} y={432} s={26} />
        <T x="830" y="466" s="15.2" w={400}>改札口（1F）へ</T>
        <path d="M797 336 H840 M805 426 H845" stroke="#0d9a48" strokeWidth="5" strokeDasharray="5 4.5" fill="none" />
        <g fill="#0d9a48">
          <polygon points="781,336 797,330 797,342" /><polygon points="855,336 839,330 839,342" /><polygon points="788,426 804,420 804,432" /><polygon points="859,426 843,420 843,432" />
        </g>
        <Num x="1172" y="368" s={28}>2</Num><Arrow x1={1197} y1={369} x2={1214} y2={369} w={4} /><T x="1221" y="368" s="19.5">新宿</T>
        <Num x="1172" y="397" s={28}>1</Num><Arrow x1={1214} y1={398} x2={1197} y2={398} w={4} /><T x="1221" y="399" s="19.8">京王八王子</T><T x="1221" y="414" s="19.8">高尾山口</T><T x="1221" y="429" s="19.8">橋本</T>

        <path d="M502 582 H659 V643 H590 V801 H502 Z" fill="#f3e4de" stroke="#998" /><path d="M608 582 V643" stroke="#998" />
        <path d="M590 671 L608 643 H708 V612 H730 L770 643 H1026 V801 H946 V697 H692 L680 715 V775 L702 801 H590 V745 H552 V732 H590 Z" fill={paid} stroke="#998" />
        <path d="M765 667 H983 V790 H965 M575 653 H660 L700 642 Q735 635 738 662 L765 667 M820 667 V655 M882 667 V685" stroke="#0d9a48" strokeWidth="5" strokeDasharray="5 4.5" fill="none" />
        <g fill="#0d9a48"><polygon points="560,653 576,647 576,659" /><polygon points="663,653 647,647 647,659" /><polygon points="820,645 812,659 828,659" /><polygon points="882,694 874,682 890,682" /><polygon points="953,790 968,784 968,796" /><polygon points="983,692 975,706 991,706" /></g>
        <Sym n="ticket" x={585} y={608} s={26} /><Sym n="office" x={622} y={605} s={27} /><Sym n="wheel" x={664} y={619} s={30} /><Sym n="toilet" x={731} y={596} s={27} /><Sym n="wheel" x={731} y={618} s={27} />
        <rect x="508" y="664" width="70" height="19" fill="#f4e92a" stroke="#555" /><T x="543" y="674" s="19" a="middle">改札口</T>
        <T x="508" y="698" s="15.2" w={400}>2 ホームへ</T><Dot x={552} y={713}>A</Dot><Steps x={560} y={711} s={0.95} /><T x="457" y="741" s="17" w={400}>(22:30まで)</T>
        <Atm x={560} y={741} w={30} /><Sym n="fare" x={614} y={677} s={26} /><Sym n="locker" x={621} y={782} s={26} />
        <Dot x={676} y={692}>B</Dot><Steps x={686} y={652} s={1} /><Steps x={690} y={675} s={1} /><T x="669" y="708" s="15.2" w={400}>2 ホームへ</T>
        <Steps x={694} y={778} /><Dot x={738} y={795}>D</Dot><T x="697" y="811" s="15.2" w={400}>1 ホームへ</T>
        <T x="761" y="583" s="15" w={400}>井の頭線3ホーム</T><T x="768" y="595" s="15" w={400}>（B1F）へ</T><Dot x={777} y={611}>I</Dot><Steps x={765} y={622} s={1.1} /><Rail d="M776 645 L802 622" fill="#fff" w={6} />
        <Sym n="elev" x={808} y={626} s={26} /><T x="854" y="623" s="15.2" w={400}>井の頭線3ホーム</T><T x="858" y="636" s="15" w={400}>（B1F）へ</T>
        <Sym n="aed" x={750} y={686} s={26} /><Sym n="shop" x={778} y={686} s={26} /><Sym n="elev" x={869} y={696} s={26} />
        <T x="751" y="733" s="15.2" w={400}>京王線2ホーム（2F）</T><T x="751" y="748" s="14.6" w={400}>井の頭線4ホーム（B1F）へ</T><T x="851" y="813" s="14.6" w={400}>京王線1ホーム（2F）へ</T><Sym n="elev" x={920} y={780} s={26} />
        <T x="1045" y="607" s="15" w={400}>井の頭線4ホーム</T><T x="1050" y="619" s="15" w={400}>（B1F）へ</T><Steps x={1010} y={622} s={1.05} /><Dot x={1060} y={635}>J</Dot>
        <Steps x={1025} y={662} s={1} /><Steps x={1025} y={672} s={0.95} /><T x="1066" y="667" s="15.2" w={400}>2 ホームへ</T><Dot x={1072} y={684}>C</Dot>
        <Steps x={1025} y={775} s={1} /><Steps x={1025} y={783} s={0.95} /><T x="1066" y="779" s="15.2" w={400}>1 ホームへ</T><Dot x={1072} y={795}>E</Dot>

        <rect x="527" y="966" width="128" height="27" fill="#bfdc9b" stroke="#aac" /><T x="591" y="980" s="26.5" a="middle">井の頭線</T>
        <T x="731" y="916" s="19.5">吉祥寺</T><Num x="810" y="915" s={29}>3</Num><Num x="848" y="915" s={29}>4</Num><T x="875" y="916" s="20">渋谷</T>
        <Arrow x1={810} y1={898} x2={810} y2={885} w={4} /><Arrow x1={848} y1={885} x2={848} y2={898} w={4} />
        <g fill={home} stroke="#5d6f95" strokeWidth="2">
          <path d="M731 1275 V1125 H700 V1093 H731 V965 A30 24 0 0 1 791 965 V1275 Z" />
          <path d="M869 1313 V965 A30 24 0 0 1 929 965 V1313 Z" />
        </g>
        <path d="M810 936 V1280 M849 936 V1313" stroke="#d4141c" strokeWidth="7.5" />
        <rect x="652" y="1094" width="48" height="31" fill="#f3e4de" stroke="#aaa" />
        <g fill="#fff" stroke="#999"><rect x="686" y="1099" width="20" height="5" rx="2" /><rect x="686" y="1107" width="20" height="5" rx="2" /><rect x="686" y="1115" width="20" height="5" rx="2" /></g>
        <rect x="569" y="1044" width="133" height="26" fill="#f4e92a" stroke="#555" /><Sym n="intercom" x={578} y={1054} s={18} /><T x="597" y="1060" s="19">フレンテ口</T>
        <T x="604" y="1079" s="14.5" w={400}>(出口専用)</T><Atm x={713} y={1055} w={29} /><Sym n="fare" x={701} y={1077} s={26} /><T x="578" y="1136" s="14.3" w={400}>地上へ</T>
        <Rail d="M622 1160 L666 1121" fill="#fff" w={7} /><Steps x={712} y={1200} s={1.2} /><Rail d="M717 1237 L760 1198" fill="#fff" w={7} />
        <Rail d="M854 1067 L898 1027" fill="#fff" w={7} /><Rail d="M854 1122 L898 1082" fill="#fff" w={7} /><Rail d="M854 1238 L898 1199" fill="#fff" w={7} />
        <Dot x={922} y={1032}>F</Dot><Dot x={922} y={1087}>G</Dot><Dot x={885} y={1184}>H</Dot><Steps x={893} y={1217} s={1.05} /><Dot x={938} y={1227}>J</Dot><Dot x={747} y={1182}>I</Dot>
        <Arrow x1={904} y1={1041} x2={893} y2={1049} c="#1c3f8f" w={3} />
        {[[893, 1103], [893, 1221], [752, 1222], [626, 1139]].map(([x, y]) => <Arrow key={y} x1={x} y1={y} x2={x + 11} y2={y - 8} c="#e2437d" w={3} />)}
        <path d="M772 1208 V1240 M883 1252 V1280" stroke="#0d9a48" strokeWidth="5" strokeDasharray="5 4.5" />
        <g fill="#0d9a48"><polygon points="772,1195 764,1208 780,1208" /><polygon points="772,1249 764,1237 780,1237" /><polygon points="883,1240 875,1253 891,1253" /><polygon points="883,1289 875,1277 891,1277" /></g>
        <Sym n="elev" x={760} y={1252} s={25} /><Sym n="elev" x={891} y={1291} s={25} />
        <T x="690" y="1285" s="15.2" w={400}>改札口（1F）へ</T><T x="936" y="1294" s="15" w={400}>京王線2ホーム（2F）</T><T x="936" y="1307" s="15" w={400}>改札口（1F）へ</T>
        <T x="1196" y="1371" s="17.3">2025年3月末現在</T>
      </Diagram>
    </Grid.Provider>
  );
};

/* ---------- facility pictograms ---------- */

const INK = "#3e5a8b";

const Wheelchair = ({ t }) => (
  <g transform={t} fill="none" stroke={INK} strokeWidth="3.6">
    <circle cx="32" cy="13" r="3" fill={INK} />
    <path d="M32.5 16 L33.5 40 H50 L61 63 L69 59.5 M33 33 H47" />
    <path d="M26 34 A19 19 0 1 0 54 56" />
  </g>
);

const EscLoop = ({ t }) => (
  <path transform={t} d="M15.5 50 H24 L49 23 Q51 21 54 21 H63 A8 8 0 0 1 63 37 H57 L34 62 Q32 64 29 64 H15.5 A7 7 0 0 1 15.5 50 Z" fill="#fff" stroke={INK} strokeWidth="4" />
);

const EscArrow = ({ t }) => (
  <path transform={t} d="M48 64 L62 52 M50 51.5 H62.5 V64" fill="none" stroke={INK} strokeWidth="4" />
);

const PICTOS = {
  elevator: (
    <>
      <path d="M29 6 V26 M20.5 17 L29 26 L37.5 17 M50 28 V8 M41.5 17 L50 8 L58.5 17" fill="none" stroke={INK} strokeWidth="4" />
      <rect x="21" y="33" width="37" height="38" fill="#fff" stroke={INK} strokeWidth="3.6" />
      {[29, 39.5, 50].map((x) => <g key={x} fill={INK}><circle cx={x} cy="43" r="2.6" /><rect x={x - 4} y="46" width="8" height="12" rx="2" /><path d={`M${x - 2.8} 57 h2.4 v10 h-2.4z M${x + 0.4} 57 h2.4 v10 h-2.4z`} /></g>)}
    </>
  ),
  escalator: (
    <><circle cx="34" cy="17" r="4" fill={INK} /><path d="M29 24 Q29 21.5 32 21.5 H37 Q40 21.5 40 24 V34 L31 43 L29 36 Z" fill={INK} /><EscLoop /><EscArrow /></>
  ),
  wheelEscalator: <><Wheelchair t="translate(-7 -2) scale(.74)" /><EscLoop t="translate(1 8.5)" /><EscArrow t="translate(1 9)" /></>,
  stairLift: (
    <><Wheelchair t="translate(-8 -1) scale(.86)" /><path d="M6 75 V69 H17 V64 H28 V59 H39 V54 H50 V49 H61 V44 H74 V50 H67 V55 H56 V60 H45 V65 H34 V70 H22 V75 Z" fill={INK} /></>
  ),
  slope: <><Wheelchair t="translate(-6 -6) scale(1.02)" /><polygon points="7,75 74,60 74,75" fill={INK} /></>,
  wheelchair: <Wheelchair />,
  ostomate: (
    <><circle cx="40" cy="17" r="7.8" fill={INK} /><path d="M20.5 69.5 V38 Q20.5 27.5 32 27.5 H48 Q59.5 27.5 59.5 38 V69.5 Z" fill={INK} /><path d="M47 52 V64 M41 58 H53" stroke="#fff" strokeWidth="3.6" /></>
  ),
  baby: (
    <><circle cx="40" cy="19" r="8" fill={INK} /><path d="M31 29 H49 L61 44 L58 49 L49 41 V45 H31 V41 L22 49 L19 44 Z" fill={INK} />
      <path d="M31 49 L39 55 L35 59 L38 65 L33 69 L25 59 Z M49 49 L41 55 L45 59 L42 65 L47 69 L55 59 Z" fill={INK} /></>
  ),
  touch: (
    <>
      {[11, 23, 34, 46, 69].map((x) => <circle key={x} cx={x} cy="16" r="4.4" fill={INK} />)}
      {[11, 23, 34, 46, 58, 69].map((x) => <circle key={x} cx={x} cy="27.5" r="4.4" fill={INK} />)}
      <path d="M19 79 L13 63 Q16 58 20 63 L29 70 V42 Q32.5 37 36 42 V56 H37.500 V38 Q41 33 45 38 V56 H46.500 V42 Q50 38 53 42 V60 H54.500 V50 Q58 46 61 50 V79 Z" fill={INK} />
    </>
  ),
  arrow: <path d="M18 40 H58 M37 22 L58 40 L37 58" fill="none" stroke={INK} strokeWidth="7" />,
  waiting: (
    <g fill={INK}>
      <circle cx="36" cy="18" r="4.3" /><circle cx="48" cy="18" r="4.3" />
      <path d="M27 26 Q29 24 39 24 V46 H22 L11 66 L7 63 L15 43 L28 39 V35 H16 L17 31 Z M45 24 H51 Q54 25 56 38 L66 41 L72 63 L67 64 L61 49 H47 Z" />
      <path d="M19 50 H60 V54 H22 V64 H18 Z" />
    </g>
  ),
  aed: (
    <>
      <text x="10" y="20.5" fontFamily='"Noto Sans", sans-serif' fontWeight="700" fontSize="21" letterSpacing="6" fill={INK}>AED</text>
      <path d="M40 75 L19 53 C10 42 16 29 27 30 C34 30.5 38 34 40 38 C42 33 47 30 53 30 C63 30 68 42 61 53 Z" fill="#fa6937" />
      <path d="M37 58 L47 41 L52 46 L66 24 L72 33 L61 37 L54 42 L49 45 L42 56 Z" fill="#fff" stroke="#fa6937" strokeWidth="1.5" />
    </>
  ),
};

const Picto = ({ name }) => (
  <svg width="80" height="80" viewBox="0 0 80 80">
    <rect x="1" y="1" width="78" height="78" rx="4" fill="#fff" stroke={INK} strokeWidth="2" />
    {PICTOS[name]}
  </svg>
);

const Circle = () => (
  <svg width="25" height="25" fill="none" stroke="#e58bab" strokeWidth="1.2"><circle cx="12.5" cy="12.5" r="11.5" /></svg>
);

/* ---------- data ---------- */

const nav = [
  { label: "電車に乗る", sub: true, active: true }, { label: "暮らす", sub: true }, { label: "おでかけ", sub: true },
  { label: "京王の取り組み", wide: true }, { label: "京王ファン", sub: true }, { label: "IR・企業情報", sub: true }, { label: "ニュース" },
];

const anchors = ["駅構内施設", "時刻表", "京王ライナー / Mt.TAKAO号", "運賃検索", "バリアフリー設備"];

const tags = [["特急", PINK], ["急行", "#06a37e"], ["区間急行", "#d5c90a"], ["快速", "#07427f"], ["各駅停車", "#868686"]];

const timetables = [
  { line: "京王線", mt: 44, dirs: ["上り（新宿・都営線本八幡方面）", "下り（京王八王子・橋本・高尾山口方面）"] },
  { line: "井の頭線", mt: 56, dirs: ["上り（渋谷方面）", "下り（吉祥寺方面）"] },
];

const facilities = [
  {
    mt: 46.5, cols: "repeat(5, 1fr)", heads: [["段差解消および昇降設備", 5]],
    items: [["elevator", "エレベーター", true], ["escalator", "エスカレーター", true], ["wheelEscalator", "車イス対応エスカレーター", false], ["stairLift", "車イス用昇降機", false], ["slope", "スロープ", true]],
  },
  {
    mt: 41, cols: "151.5px 152px 152px repeat(4, 1fr)", heads: [["トイレ", 3], ["触知案内", 1], ["行先案内板", 1], ["ホーム待合室", 1], ["AED", 1]],
    items: [["wheelchair", "車イス対応", true], ["ostomate", "オストメイト対応", true], ["baby", "ベビーシート", true], ["touch", "触知案内", true], ["arrow", "行先案内板", true], ["waiting", "待合室", true], ["aed", "AED", true]],
  },
];

const crumbs = ["TOP", "電車に乗る", "駅・時刻表・路線図", "明大前駅"];

const socials = [
  ["x", "京王電鉄運行情報【公式】"], ["x", "京王電鉄広報【公式】"], ["youtube", "京王電鉄公式チャンネル（YouTube）"],
  ["instagram", "京王沿線お出かけ情報「ivory」"], ["line", "「京王ニュース」公式LINE"],
];

const sitemap = [
  [
    { title: "電車に乗る", items: ["運行情報", "駅・時刻表・路線図", "遅延証明書", "きっぷ・定期・PASMO", "京王ライナー/Mt.TAKAO号", "京王トレインポイント", "忘れ物", "振替輸送について", "安心して乗車していただくために", <>京王電鉄京王線（笹塚駅～仙川駅間）<br />連続立体交差事業</>] },
  ],
  [
    { title: "暮らす", items: ["暮らしおすすめ情報", "生活をサポート", "住まいをサポート", "ワークスポット", "ショッピング・グルメ", "バス・タクシー"] },
    { title: "おでかけ", mt: 40, items: ["イベント・キャンペーン", "沿線情報誌", "新宿エリア", "井の頭沿線エリア", "調布・府中エリア", "聖蹟桜ヶ丘・高幡不動エリア", "相模原線エリア", "高尾エリア"] },
  ],
  [
    { title: "京王の取り組み", items: [] },
    { title: "京王ファン", mt: 20.5, items: ["PRムービー・ポスター", "電車図鑑", "けい太くんのわくわくステーション"] },
    { title: "IR・企業情報", mt: 40, items: ["会社情報", "株主・投資家(IR)", "サステナビリティ"] },
  ],
  [
    { title: "ニュース", items: ["お知らせ", "ニュースリリース"] },
    { mt: 50, items: ["お問合せ", "採用情報", "法人の方へ", "京王グループ"] },
  ],
];

/* ---------- sections ---------- */

const Heading = ({ top, children }) => <HeadingRow $top={top}><span>{children}</span></HeadingRow>;

const StationSign = () => (
  <>
    <StationHead>
      <NameRow>
        <StationNumber code="KO" num="06" />
        <StationNumber code="IN" num="08" />
        <StationName>明大前</StationName>
      </NameRow>
      <Ruby><span>めいだいまえ</span><span>Meidaimae</span></Ruby>
    </StationHead>
    <PinkBar />
    <Neighbours>
      <NeighbourRow>
        <StationPill><StationNumber code="KO" num="07" size={31} />下高井戸</StationPill>
        <LineName><LongArrow />京王線<LongArrow flip /></LineName>
        <StationPill><StationNumber code="KO" num="05" size={31} />代田橋</StationPill>
      </NeighbourRow>
      <NeighbourRow>
        <StationPill><StationNumber code="IN" num="09" size={31} />永福町</StationPill>
        <LineName><LongArrow />井の頭線<LongArrow flip /></LineName>
        <StationPill><StationNumber code="IN" num="07" size={31} />東松原</StationPill>
      </NeighbourRow>
    </Neighbours>
    <StopTitle>停車する電車</StopTitle>
    <Tags>
      <Tag $w={131} $border="#c2256c"><LinerMark />京王ライナー</Tag>
      <Tag $w={147} $border="#5d9a10"><MountMark />Mt.TAKAO号</Tag>
      {tags.map(([name, bg]) => <Tag key={name} $bg={bg}>{name}</Tag>)}
    </Tags>
    <Note>※Mt.TAKAO号は土・休日のみ運行しています。</Note>
  </>
);

const Maps = () => (
  <MapGrid>
    <MapColumn>
      <MapCard $h={425}><MapLabel>駅構内マップ</MapLabel><StationMap /><ZoomIn /></MapCard>
      <PillButton $h={52.5} $mt={19.5}><PdfIcon />駅構内マップ</PillButton>
      <MapCard $h={724} $mt={35}><MapLabel>階層図</MapLabel><FloorMap /><ZoomIn /></MapCard>
      <PillButton $h={52.5} $mt={19}><PdfIcon />階層図</PillButton>
    </MapColumn>
    <MapColumn>
      <MapCard $h={681.5}><MapLabel>座席指定券売機</MapLabel><SeatMap /><ZoomIn /></MapCard>
      <PillButton $h={52.5} $mt={19}><PdfIcon />座席指定券売機</PillButton>
    </MapColumn>
  </MapGrid>
);

const Timetable = ({ line, mt, dirs }) => (
  <TimeBox $mt={mt}>
    <TimeTitle>{line}</TimeTitle>
    <Directions>
      {dirs.map((dir) => (
        <Direction key={dir}>
          <DirectionTitle>{dir}</DirectionTitle>
          <Days>
            <DayButton><Clock color="#062a68" />平日</DayButton>
            <DayButton $holiday><Clock color="#c53a98" />土曜・休日</DayButton>
          </Days>
        </Direction>
      ))}
    </Directions>
  </TimeBox>
);

const Facilities = ({ mt, cols, heads, items }) => (
  <FacilityTable $mt={mt} $cols={cols}>
    {heads.map(([name, span]) => <HeadCell key={name} $span={span}>{name}</HeadCell>)}
    {items.map(([icon, name]) => <FacilityCell key={name}><Picto name={icon} />{name}</FacilityCell>)}
    {items.map(([icon, name, yes]) => <Cell key={icon} $yes={yes}>{yes ? <Circle /> : <Dash />}</Cell>)}
  </FacilityTable>
);

const TitleMark = () => (
  <svg width="18" height="18"><circle cx="9" cy="9" r="9" fill={NAVY} /><path d="M7.5 5.5 L11 9 L7.5 12.5" fill="none" stroke="#fff" strokeWidth="1.3" /></svg>
);

const PlayMark = () => (
  <svg width="28" height="31" viewBox="0 0 28 31">
    <polygon points="1,1 14,15.5 1,30" fill="#4f7fd6" />
    <polygon points="1,0 20,10.5 14,16" fill="#35a853" />
    <polygon points="1,31 20,20.5 14,15" fill="#ea4535" />
    <polygon points="20,10.3 28,15.5 20,20.7 14,15.5" fill="#fbbc05" />
  </svg>
);

const SocialIcon = ({ kind }) => {
  if (kind === "x") return <Round $bg="#000"><FaXTwitter size={16} /></Round>;
  if (kind === "instagram") return <Round $bg="#d6306f"><FaInstagram size={18} /></Round>;
  if (kind === "youtube") {
    return (
      <Round $bg="#fd0000">
        <svg width="18" height="18"><rect x="1" y="2.5" width="16" height="13" rx="4.5" fill="#fff" /><polygon points="7,5.5 12.5,9 7,12.5" fill="#fd0000" /></svg>
      </Round>
    );
  }
  return (
    <Round $bg="#c2137c">
      <svg width="32" height="32" viewBox="0 0 32 32">
        <polygon points="0,19 32,14 32,32 0,32" fill="#17386f" />
        <text x="16" y="14" textAnchor="middle" fontSize="10.5" letterSpacing="0" fill="#fff">京王</text>
        <text x="17" y="26" textAnchor="middle" fontSize="6" fontWeight="700" letterSpacing="0" fill="#fff" transform="rotate(-10 16 24)">ニュース</text>
      </svg>
    </Round>
  );
};

const PromoArea = () => (
  <Promo>
    <AppColumn>
      <PromoTitle><TitleMark />京王アプリ</PromoTitle>
      <TwoTone />
      <AppInfo>
        <AppIcon><Logo w={62} /></AppIcon>
        <p>運行情報やおトク情報、列車の走行位置もリアルタイムでわかる、京王沿線利用者にオススメのアプリ！</p>
      </AppInfo>
      <Stores>
        <StoreBadge $w={128} $gap={6}><FaApple size={25} /><StoreText>App Store<small>からダウンロード</small></StoreText></StoreBadge>
        <StoreBadge $w={160} $gap={9}><PlayMark /><StoreText $play>Google Play<small>で手に入れよう</small></StoreText></StoreBadge>
      </Stores>
    </AppColumn>
    <SocialColumn>
      <PromoTitle><TitleMark />ソーシャルメディアアカウント</PromoTitle>
      <TwoTone />
      <Cards>
        {socials.map(([kind, name]) => <SocialCard key={name}><SocialIcon kind={kind} />{name}<External /></SocialCard>)}
      </Cards>
    </SocialColumn>
  </Promo>
);

const SiteFooter = () => (
  <Footer>
    <FooterTitle><Slash />TOP</FooterTitle>
    <Sitemap>
      {sitemap.map((col, i) => (
        <div key={i}>
          {col.map((group, j) => (
            <div key={j}>
              {group.title && <FooterTitle $mt={group.mt}><Slash />{group.title}</FooterTitle>}
              <FooterList $mt={group.title ? 18 : group.mt}>
                {group.items.map((item, n) => <li key={n}>{item}</li>)}
              </FooterList>
            </div>
          ))}
        </div>
      ))}
    </Sitemap>
    <FooterBar>
      <Links>
        <span>個人情報保護方針</span><span>ウェブアクセシビリティ方針</span><span>サイトのご利用にあたって</span><span>サイトマップ</span>
      </Links>
      <Language>
        <svg width="17" height="17" fill="none" stroke="#fff"><circle cx="8.5" cy="8.5" r="7.8" /><ellipse cx="8.5" cy="8.5" rx="3.8" ry="7.8" /><path d="M1.5 5.5 H15.5 M1.5 11.5 H15.5 M8.5 1 V16" /></svg>
        Language
        <Chevron w={11} h={6.5} color="#fff" />
      </Language>
    </FooterBar>
    <Copyright>Copyright(C) Keio Corporation All rights reserved.</Copyright>
  </Footer>
);

export default function App() {
  return (
    <Page lang="ja">
      <GlobalStyle />
      <Header>
        <Logo />
        <Nav>
          {nav.map(({ label, sub, active, wide }) => (
            <NavItem key={label} $active={active} $wide={wide}>{label}{sub && <Chevron w={13} h={8} />}</NavItem>
          ))}
        </Nav>
      </Header>
      <BackLink><Chevron dir="left" w={9} h={13} />駅・時刻表・路線図</BackLink>
      <StationSign />
      <Rule />
      <Anchors>
        {anchors.map((name) => <Anchor key={name}>{name}<Chevron w={12} h={8} color="#fff" sw={1} /></Anchor>)}
      </Anchors>
      <Heading>駅構内施設</Heading>
      <Maps />
      <Heading top={107}>時刻表</Heading>
      {timetables.map((t) => <Timetable key={t.line} {...t} />)}
      <Heading top={72}>京王ライナー / Mt.TAKAO号</Heading>
      <ButtonRow>
        <PillButton>京王ライナー / Mt.TAKAO号WEB購入<EndIcon $right={8}><Chevron dir="right" w={6} h={11} /></EndIcon></PillButton>
        <PillButton>停車駅・時刻表・料金はこちら<EndIcon $right={8}><Chevron dir="right" w={6} h={11} /></EndIcon></PillButton>
      </ButtonRow>
      <Heading top={72}>運賃検索</Heading>
      <ButtonRow>
        <PillButton>運賃・乗換検索<EndIcon $right={12}><NewWindow /></EndIcon></PillButton>
      </ButtonRow>
      <Heading top={71}>バリアフリー設備</Heading>
      {facilities.map((f) => <Facilities key={f.mt} {...f} />)}
      <PageTop><Chevron dir="up" w={16} h={10} color="#d5d5d5" /></PageTop>
      <Breadcrumb>
        {crumbs.map((name, i) => (
          <React.Fragment key={name}>
            {i > 0 && <Chevron dir="right" w={7} h={11} color="#222" />}
            <span>{name}</span>
          </React.Fragment>
        ))}
      </Breadcrumb>
      <PromoArea />
      <SiteFooter />
    </Page>
  );
}
